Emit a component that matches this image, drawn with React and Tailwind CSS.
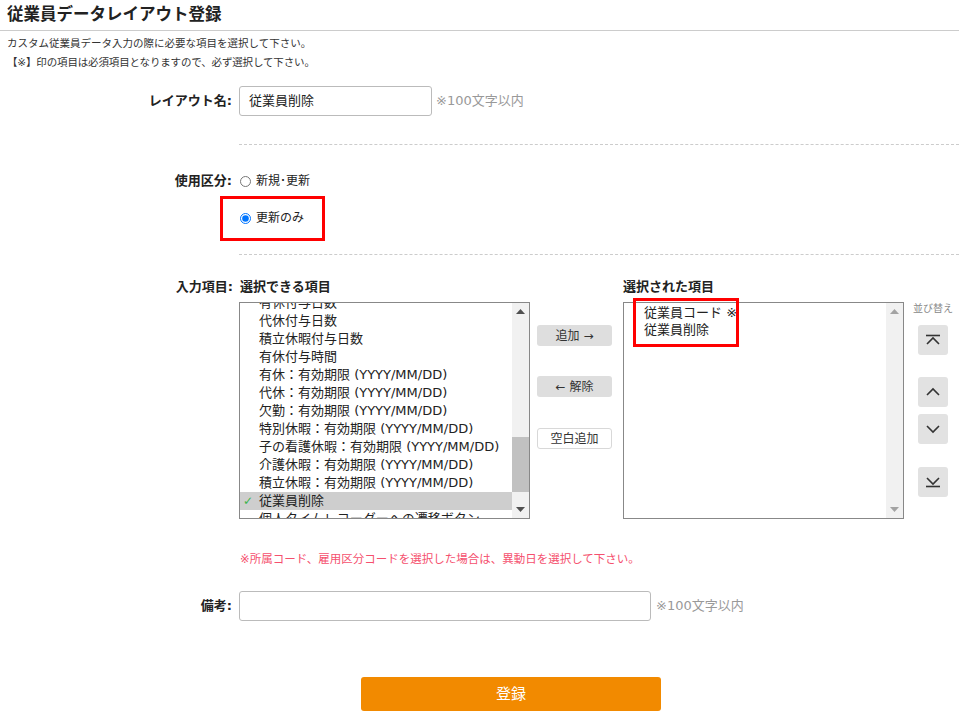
import React from 'react';

const leftItems = [
    { label: '有休付与日数' },
    { label: '代休付与日数' },
    { label: '積立休暇付与日数' },
    { label: '有休付与時間' },
    { label: '有休：有効期限 (YYYY/MM/DD)' },
    { label: '代休：有効期限 (YYYY/MM/DD)' },
    { label: '欠勤：有効期限 (YYYY/MM/DD)' },
    { label: '特別休暇：有効期限 (YYYY/MM/DD)' },
    { label: '子の看護休暇：有効期限 (YYYY/MM/DD)' },
    { label: '介護休暇：有効期限 (YYYY/MM/DD)' },
    { label: '積立休暇：有効期限 (YYYY/MM/DD)' },
    { label: '従業員削除', selected: true },
    { label: '個人タイムレコーダーへの遷移ボタン' },
];

const rightItems = ['従業員コード ※', '従業員削除'];

const Arrow = ({ dir, color }) => (
    <svg width="9" height="5" viewBox="0 0 9 5">
        {dir === 'up' ? <polygon points="0,5 9,5 4.5,0" fill={color} /> : <polygon points="0,0 9,0 4.5,5" fill={color} />}
    </svg>
);

const Scrollbar = ({ active }) => {
    const c = active ? '#505050' : '#a3a3a3';
    return (
        <div className="w-[17px] h-full bg-[#f1f1f1] flex flex-col items-center">
            <div className="h-[17px] flex items-center justify-center"><Arrow dir="up" color={c} /></div>
            <div className="flex-1 w-full px-[1px] relative">
                {active && <div className="absolute left-0 right-0 top-[117px] h-[55px] bg-[#c1c1c1]" />}
            </div>
            <div className="h-[17px] flex items-center justify-center"><Arrow dir="down" color={c} /></div>
        </div>
    );
};

const SortIcon = ({ type }) => {
    const s = { stroke: '#333', strokeWidth: 1.6, fill: 'none' };
    return (
        <svg width="16" height="12" viewBox="0 0 16 12">
            {type === 'top' && (<><line x1="1" y1="1.5" x2="15" y2="1.5" {...s} /><polyline points="2,10 8,4 14,10" {...s} /></>)}
            {type === 'up' && <polyline points="2,9 8,3 14,9" {...s} />}
            {type === 'down' && <polyline points="2,3 8,9 14,3" {...s} />}
            {type === 'bottom' && (<><polyline points="2,2 8,8 14,2" {...s} /><line x1="1" y1="10.5" x2="15" y2="10.5" {...s} /></>)}
        </svg>
    );
};

const SortBtn = ({ type, className = '' }) => (
    <div className={`ml-[5px] w-[30px] h-[30px] bg-[#e2e2e2] rounded-[3px] flex items-center justify-center ${className}`}>
        <SortIcon type={type} />
    </div>
);

const Label = ({ children }) => (
    <div className="w-[233px] shrink-0 text-right pr-[1px] font-bold text-[13px] text-[#222]">{children}</div>
);

export default function App() {
    return (
        <div className="w-[959px] min-h-[723px] bg-white text-[#222]" style={{ fontFamily: '"DejaVu Sans", "Noto Sans CJK JP", sans-serif' }}>
            <div className="pl-[7px] pt-[3px] pb-[3px] leading-[24px] text-[16.5px] font-bold border-b border-[#cccccc]">従業員データレイアウト登録</div>
            <div className="mt-[3px] pl-[7px] text-[10.5px] leading-[19px] text-[#333]">
                <div>カスタム従業員データ入力の際に必要な項目を選択して下さい。</div>
                <div className="tracking-[-0.15px]">【※】印の項目は必須項目となりますので、必ず選択して下さい。</div>
            </div>

            <div className="mt-[14px] flex items-center h-[30px]">
                <Label>レイアウト名:</Label>
                <div className="ml-[6px] w-[193px] h-[30px] border border-[#bbb] rounded-[3px] flex items-center px-[9px] text-[13px]">従業員削除</div>
                <div className="ml-[4px] text-[13px] text-[#999]">※100文字以内</div>
            </div>

            <div className="mt-[28px] ml-[239px] border-t border-dashed border-[#cccccc]" />

            <div className="mt-[26px] flex items-center h-[20px]">
                <Label>使用区分:</Label>
                <label className="ml-[6px] flex items-center text-[12px]">
                    <input type="radio" readOnly className="w-[11px] h-[11px] m-0 ml-[1px] mr-[5px]" />
                    新規･更新
                </label>
            </div>
            <div className="mt-[17px] flex items-center h-[20px]">
                <div className="w-[239px] shrink-0" />
                <label className="relative flex items-center text-[12px]">
                    <input type="radio" checked readOnly className="w-[11px] h-[11px] m-0 ml-[1px] mr-[5px] accent-[#0075ff]" />
                    更新のみ
                    <div className="absolute left-[-19px] top-[-13px] w-[105px] h-[45px] border-[3px] border-[#ff0000]" />
                </label>
            </div>

            <div className="mt-[26px] ml-[239px] border-t border-dashed border-[#cccccc]" />

            <div className="mt-[22px] flex items-start">
                <div className="w-[233px] shrink-0 text-right font-bold text-[13px] leading-[20px]">入力項目:</div>
                <div className="ml-[6px] flex items-start">
                    <div>
                        <div className="font-bold text-[13px] leading-[20px] mb-[5px] pl-[1px]">選択できる項目</div>
                        <div className="w-[291px] h-[217px] border border-[#888] flex overflow-hidden">
                            <div className="flex-1 overflow-hidden">
                                <div className="mt-[-9px]">
                                    {leftItems.map((it, i) => (
                                        <div key={i} className={`h-[18px] leading-[18px] text-[13px] whitespace-nowrap flex items-center ${it.selected ? 'bg-[#cecece]' : ''}`}>
                                            <span className="w-[19px] pl-[3px] text-[12px] font-bold text-[#3cb44b]">{it.selected ? '✓' : ''}</span>
                                            <span>{it.label}</span>
                                        </div>
                                    ))}
                                </div>
                            </div>
                            <Scrollbar active />
                        </div>
                    </div>

                    <div className="ml-[7px] pt-[48px] flex flex-col text-[12px] text-[#333]">
                        <div className="w-[75px] h-[21px] bg-[#dedede] rounded-[3px] flex items-center justify-center">追加 →</div>
                        <div className="mt-[30px] w-[75px] h-[21px] bg-[#dedede] rounded-[3px] flex items-center justify-center">← 解除</div>
                        <div className="mt-[31px] w-[75px] h-[21px] bg-white border border-[#d8d8d8] rounded-[3px] flex items-center justify-center">空白追加</div>
                    </div>

                    <div className="ml-[11px]">
                        <div className="font-bold text-[13px] leading-[20px] mb-[5px]">選択された項目</div>
                        <div className="relative w-[281px] h-[217px] border border-[#888] flex">
                            <div className="flex-1 pt-[1px] pl-[20px]">
                                {rightItems.map((t, i) => (
                                    <div key={i} className="h-[17px] leading-[17px] text-[13px] whitespace-nowrap">{t}</div>
                                ))}
                            </div>
                            <Scrollbar />
                            <div className="absolute left-[9px] top-[-5px] w-[106px] h-[49px] border-[3px] border-[#ff0000]" />
                        </div>
                    </div>

                    <div className="ml-[9px] pt-[25px] flex flex-col items-start">
                        <div className="text-[10px] leading-[14px] text-[#888] mb-[9px] whitespace-nowrap">並び替え</div>
                        <SortBtn type="top" />
                        <SortBtn type="up" className="mt-[22px]" />
                        <SortBtn type="down" className="mt-[7px]" />
                        <SortBtn type="bottom" className="mt-[23px]" />
                    </div>
                </div>
            </div>

            <div className="mt-[31px] ml-[240px] text-[11.5px] leading-[18px] text-[#f5506e]">※所属コード、雇用区分コードを選択した場合は、異動日を選択して下さい。</div>

            <div className="mt-[23px] flex items-center h-[30px]">
                <Label>備考:</Label>
                <div className="ml-[6px] w-[412px] h-[30px] border border-[#bbb] rounded-[3px]" />
                <div className="ml-[5px] text-[13px] text-[#999]">※100文字以内</div>
            </div>

            <div className="mt-[56px] ml-[361px] w-[300px] h-[34px] bg-[#f28a00] rounded-[3px] flex items-center justify-center text-white text-[15px]">登録</div>
        </div>
    );
}
